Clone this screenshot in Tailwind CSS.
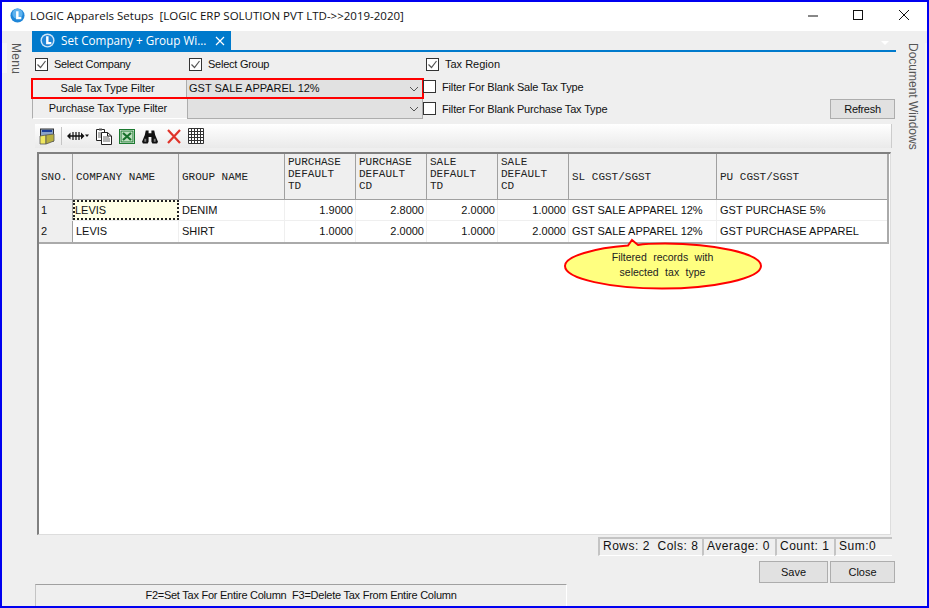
<!DOCTYPE html>
<html lang="en">
<head>
  <meta charset="UTF-8" />
  <title>LOGIC Apparels Setups</title>
  <script src="https://cdn.jsdelivr.net/npm/@tailwindcss/browser@4"></script>
</head>
<body class="bg-[#efefef]">
  <div class="relative w-[929px] h-[608px] overflow-hidden border-2 border-[#0000f0] bg-[#efefef] flex flex-col font-['Liberation_Sans',sans-serif] text-[11px] text-[#111]">

    <!-- title bar -->
    <div class="h-[29px] bg-white flex items-center shrink-0">
      <svg class="ml-[8px] mb-[2px] w-[15px] h-[15px]" viewBox="0 0 16 16"><circle cx="8" cy="8" r="7.5" fill="#1f86d8"/><circle cx="8" cy="6" r="5.500" fill="#5fb2ee"/><path d="M6.500 3.500h2.600v6.200h3v2.300H6.500z" fill="#fff"/></svg>
      <span class="ml-[5px] mb-[2px] font-['Open_Sans',sans-serif] text-[11.5px] whitespace-pre">LOGIC Apparels Setups  [LOGIC ERP SOLUTION PVT LTD-&gt;&gt;2019-2020]</span>
      <div class="ml-auto flex items-center">
        <svg class="w-[46px] h-[16px]" viewBox="0 0 46 16"><path d="M19 7h10" stroke="#111" stroke-width="1"/></svg>
        <svg class="w-[46px] h-[16px]" viewBox="0 0 46 16"><rect x="18.500" y="1.500" width="9" height="9" fill="none" stroke="#111"/></svg>
        <svg class="w-[46px] h-[16px]" viewBox="0 0 46 16"><path d="M18 1l10 10M28 1L18 11" stroke="#111" stroke-width="1"/></svg>
      </div>
    </div>

    <div class="flex flex-1 min-h-0">
      <!-- left dock strip -->
      <div class="w-[30px] shrink-0 pt-[12px] flex">
        <div class="w-[5px] h-[30px] bg-[#f5f5f5]"></div>
        <span class="h-[32px] [writing-mode:vertical-rl] text-[12px] text-[#555] tracking-[0.3px]">Menu</span>
      </div>

      <!-- centre -->
      <div class="w-[864px] shrink-0 flex flex-col relative">
        <!-- tab strip -->
        <div class="h-[21px] shrink-0 border-b-2 border-[#007acc] flex relative">
          <div class="w-[199px] h-[19px] bg-[#007acc] text-white flex items-center">
            <svg class="ml-[8px] w-[15px] h-[15px]" viewBox="0 0 16 16"><circle cx="8" cy="8" r="7.500" fill="#cfe6f8"/><circle cx="8" cy="8" r="6" fill="#1f86d8"/><path d="M6.500 3.500h2.600v6.200h3v2.300H6.500z" fill="#fff"/></svg>
            <span class="ml-[6px] font-['Open_Sans',sans-serif] text-[11.7px] whitespace-nowrap">Set Company + Group Wi...</span>
            <svg class="ml-auto mr-[6px] w-[10px] h-[10px]" viewBox="0 0 10 10"><path d="M1 1l8 8M9 1L1 9" stroke="#fff" stroke-width="1.200"/></svg>
          </div>
          <div class="absolute right-[7px] top-[10px] w-0 h-0 border-l-[4px] border-r-[4px] border-t-[4px] border-l-transparent border-r-transparent border-t-white"></div>
        </div>

        <!-- checkboxes row -->
        <div class="h-[23px] shrink-0 flex items-center mt-[1px]">
          <label class="ml-[3px] w-[154px] flex items-center">
            <svg class="w-[13px] h-[13px]" viewBox="0 0 13 13"><rect x=".5" y=".5" width="12" height="12" fill="#fff" stroke="#333"/><path d="M2.500 6.500l3 3 5-6.500" fill="none" stroke="#555" stroke-width="1.200"/></svg>
            <span class="ml-[6px] tracking-[-0.3px]">Select Company</span>
          </label>
          <label class="w-[237px] flex items-center">
            <svg class="w-[13px] h-[13px]" viewBox="0 0 13 13"><rect x=".5" y=".5" width="12" height="12" fill="#fff" stroke="#333"/><path d="M2.500 6.500l3 3 5-6.500" fill="none" stroke="#555" stroke-width="1.200"/></svg>
            <span class="ml-[6px] tracking-[-0.25px]">Select Group</span>
          </label>
          <label class="flex items-center">
            <svg class="w-[13px] h-[13px]" viewBox="0 0 13 13"><rect x=".5" y=".5" width="12" height="12" fill="#fff" stroke="#333"/><path d="M2.500 6.500l3 3 5-6.500" fill="none" stroke="#555" stroke-width="1.200"/></svg>
            <span class="ml-[6px]">Tax Region</span>
          </label>
        </div>

        <!-- filter rows -->
        <div class="h-[23px] shrink-0 flex">
          <div class="ml-[-1px] mt-[2px] w-[393px] h-[21px] border-2 border-[#f00] flex">
            <div class="w-[153px] flex items-center justify-center pr-[4px] tracking-[-0.1px]">Sale Tax Type Filter</div>
            <div class="flex-1 bg-[#e1e1e1] border-l border-[#adadad] flex items-center pl-[2px]">
              GST SALE APPAREL 12%
              <svg class="ml-auto mr-[3px] w-[10px] h-[6px]" viewBox="0 0 10 6"><path d="M1 1l4 4 4-4" fill="none" stroke="#555"/></svg>
            </div>
          </div>
          <svg class="ml-[-1px] mt-[4px] w-[13px] h-[13px]" viewBox="0 0 13 13"><rect x=".5" y=".5" width="12" height="12" fill="#fff" stroke="#333"/></svg>
          <span class="ml-[6px] mt-[1px] leading-[20px] tracking-[-0.16px]">Filter For Blank Sale Tax Type</span>
        </div>
        <div class="h-[20px] shrink-0 flex relative">
          <div class="w-[391px] h-[20px] flex">
            <div class="w-[155px] flex items-center justify-center pr-[4px] border-l border-b border-l-[#adadad] border-b-white tracking-[-0.1px]">Purchase Tax Type Filter</div>
            <div class="flex-1 bg-[#e1e1e1] border-l border-r border-b border-[#adadad] flex items-center">
              <svg class="ml-auto mr-[3px] w-[10px] h-[6px]" viewBox="0 0 10 6"><path d="M1 1l4 4 4-4" fill="none" stroke="#555"/></svg>
            </div>
          </div>
          <svg class="mt-[3px] w-[13px] h-[13px]" viewBox="0 0 13 13"><rect x=".5" y=".5" width="12" height="12" fill="#fff" stroke="#333"/></svg>
          <span class="ml-[6px] leading-[20px] tracking-[-0.16px]">Filter For Blank Purchase Tax Type</span>
          <button class="absolute left-[798px] top-0 w-[65px] h-[20px] bg-[#e1e1e1] border border-[#adadad] tracking-[-0.3px]">Refresh</button>
        </div>

        <!-- toolbar -->
        <div class="h-[24px] shrink-0 mt-[5px] ml-[3px] w-[857px] bg-gradient-to-b from-white to-[#eaeaea] border-r border-[#ccc] flex items-center">
          <svg class="ml-[4px] w-[16px] h-[17px]" viewBox="0 0 16 17"><rect x="1.500" y="1" width="13" height="12" fill="#8aa2c8" stroke="#333"/><rect x="3" y="2" width="10" height="2" fill="#1c3e9a"/><path d="M1 8l6-1v9H1z" fill="#f0e860" stroke="#555" stroke-width=".8"/><path d="M7 7l8-1v7l-8 3z" fill="#b8b040" stroke="#555" stroke-width=".8"/></svg>
          <div class="ml-[6px] w-px h-[18px] bg-[#c4c4c4]"></div>
          <svg class="ml-[5px] w-[22px] h-[10px]" viewBox="0 0 22 10"><path d="M3 5h12" stroke="#111" stroke-width="1.500"/><path d="M0 5l3.500-3.500v7zM17.500 5L14 1.500v7z" fill="#111"/><path d="M6 1v8M9 1v8M12 1v8" stroke="#111" stroke-width="1.200"/><path d="M18 3.500h4l-2 2.500z" fill="#111"/></svg>
          <svg class="ml-[7px] w-[16px] h-[17px]" viewBox="0 0 16 17"><path d="M.5 1.500h8v11h-8z" fill="#fff" stroke="#222"/><path d="M3 .5h3v2H3z" fill="#555"/><path d="M5.500 4.500h6l4 3.500v8.500h-10z" fill="#fff" stroke="#222"/><path d="M11.500 4.500V8h4" fill="none" stroke="#222"/><path d="M2 5h3M2 7h3M2 9h3M7 9h6M7 11h7M7 13h7" stroke="#444" stroke-width=".8"/></svg>
          <svg class="ml-[7px] w-[16px] h-[15px]" viewBox="0 0 16 15"><rect x=".5" y=".5" width="15" height="14" fill="#fff" stroke="#1c7a30"/><rect x="2" y="2" width="12" height="11" fill="#bfe0c0" stroke="#1c7a30"/><path d="M4 4l8 7M12 4l-8 7" stroke="#17702b" stroke-width="2.200"/></svg>
          <svg class="ml-[7px] w-[16px] h-[15px]" viewBox="0 0 17 15"><path d="M4 1h3v3h3V1h3l1 5 3 7-1 2H11l-1-2V8H7v5l-1 2H1l-1-2 3-7z" fill="#111"/><path d="M2.500 10h2v3h-2zM12.500 10h2v3h-2z" fill="#777"/></svg>
          <svg class="ml-[9px] w-[14px] h-[15px]" viewBox="0 0 14 15"><path d="M1 1l12 13M13 1L1 14" stroke="#e0342a" stroke-width="2.200"/></svg>
          <svg class="ml-[7px] w-[16px] h-[16px]" viewBox="0 0 16 16"><path d="M.5.5h15v15H.5zM.5 3.500h15M.5 6.500h15M.5 9.500h15M.5 12.500h15M3.500.5v15M6.500.5v15M9.500.5v15M12.500.5v15" fill="#fff" stroke="#333"/></svg>
        </div>

        <!-- grid -->
        <div class="h-[383px] shrink-0 mt-[4px] ml-[5px] w-[854px] bg-white border-l-2 border-t-2 border-[#808080] border-r border-r-[#ddd] border-b border-b-[#ddd]">
          <div class="w-[850px] border-r-2 border-b-2 border-[#aaaaaa]">
            <div class="grid grid-cols-[34px_106px_106px_71px_71px_71px_71px_148px_170px] h-[46px] bg-[#efefef] border-b border-[#a0a0a0] font-['Liberation_Mono',monospace] text-[11px] leading-[12px] text-[#222]">
              <div class="flex items-center pl-[2px] border-r border-[#a0a0a0]">SNO.</div>
              <div class="flex items-center pl-[3px] border-r border-[#a0a0a0]">COMPANY NAME</div>
              <div class="flex items-center pl-[3px] border-r border-[#a0a0a0]">GROUP NAME</div>
              <div class="flex items-center pl-[3px] pb-[6px] border-r border-[#a0a0a0]">PURCHASE<br />DEFAULT<br />TD</div>
              <div class="flex items-center pl-[3px] pb-[6px] border-r border-[#a0a0a0]">PURCHASE<br />DEFAULT<br />CD</div>
              <div class="flex items-center pl-[3px] pb-[6px] border-r border-[#a0a0a0]">SALE<br />DEFAULT<br />TD</div>
              <div class="flex items-center pl-[3px] pb-[6px] border-r border-[#a0a0a0]">SALE<br />DEFAULT<br />CD</div>
              <div class="flex items-center pl-[3px] border-r border-[#a0a0a0]">SL CGST/SGST</div>
              <div class="flex items-center pl-[3px]">PU CGST/SGST</div>
            </div>
            <div class="grid grid-cols-[34px_106px_106px_71px_71px_71px_71px_148px_170px] h-[21px] border-b border-[#efefef] leading-[20px]">
              <div class="bg-[#efefef] pl-[2px] border-r border-[#a0a0a0]">1</div>
              <div class="bg-[#ffffe6] border-2 border-dotted border-[#222] leading-[16px]">LEVIS</div>
              <div class="pl-[3px] border-r border-[#efefef]">DENIM</div>
              <div class="pr-[2px] text-right border-r border-[#efefef]">1.9000</div>
              <div class="pr-[2px] text-right border-r border-[#efefef]">2.8000</div>
              <div class="pr-[2px] text-right border-r border-[#efefef]">2.0000</div>
              <div class="pr-[2px] text-right border-r border-[#efefef]">1.0000</div>
              <div class="pl-[3px] border-r border-[#efefef]">GST SALE APPAREL 12%</div>
              <div class="pl-[3px]">GST PURCHASE 5%</div>
            </div>
            <div class="grid grid-cols-[34px_106px_106px_71px_71px_71px_71px_148px_170px] h-[21px] leading-[20px]">
              <div class="bg-[#efefef] pl-[2px] border-r border-[#a0a0a0]">2</div>
              <div class="pl-[3px] border-r border-[#efefef]">LEVIS</div>
              <div class="pl-[3px] border-r border-[#efefef]">SHIRT</div>
              <div class="pr-[2px] text-right border-r border-[#efefef]">1.0000</div>
              <div class="pr-[2px] text-right border-r border-[#efefef]">2.0000</div>
              <div class="pr-[2px] text-right border-r border-[#efefef]">1.0000</div>
              <div class="pr-[2px] text-right border-r border-[#efefef]">2.0000</div>
              <div class="pl-[3px] border-r border-[#efefef]">GST SALE APPAREL 12%</div>
              <div class="pl-[3px]">GST PURCHASE APPAREL</div>
            </div>
          </div>
        </div>

        <!-- status bar -->
        <div class="h-[19px] shrink-0 mt-[2px] flex justify-end pr-[4px] text-[12px] tracking-[0.5px]">
          <div class="w-[104px] pl-[3px] border-l-2 border-t-2 border-[#c4c4c4] border-b border-b-white leading-[15px] whitespace-pre">Rows: 2  Cols: 8</div>
          <div class="w-[73px] pl-[3px] border-l-2 border-t-2 border-[#c4c4c4] border-b border-b-white leading-[15px]">Average: 0</div>
          <div class="w-[59px] pl-[3px] border-l-2 border-t-2 border-[#c4c4c4] border-b border-b-white leading-[15px]">Count: 1</div>
          <div class="w-[58px] pl-[3px] border-l-2 border-t-2 border-[#c4c4c4] border-b border-b-white leading-[15px]">Sum:0</div>
        </div>

        <!-- buttons -->
        <div class="h-[22px] shrink-0 mt-[5px] flex justify-end gap-[2px] pr-[1px]">
          <button class="w-[69px] h-[22px] bg-[#e1e1e1] border border-[#adadad]">Save</button>
          <button class="w-[65px] h-[22px] bg-[#e1e1e1] border border-[#adadad]">Close</button>
        </div>

        <!-- hint panel -->
        <div class="ml-[3px] mt-[1px] w-[532px] flex-1 border-t border-l border-r border-t-[#a0a0a0] border-l-[#c4c4c4] border-r-white flex items-center justify-center tracking-[-0.25px]">
          F2=Set Tax For Entire Column&nbsp; F3=Delete Tax From Entire Column
        </div>

        <!-- callout over the grid -->
        <div class="absolute left-[530px] top-[207px] w-[202px] h-[54px]">
          <svg class="absolute inset-0" width="202" height="54" viewBox="0 0 202 54"><path d="M70 2l6 5c8-1.500 18-1.500 27-1.500 48 0 96 10 96 22.500s-48 22.500-99 22.500S3 41 3 28c0-10 30-18 63-20.500z" fill="#ffff80" stroke="#f00" stroke-width="2"/></svg>
          <div class="absolute inset-x-0 top-[12px] pr-[1px] text-center text-[10.5px] leading-[15px] text-[#222] [word-spacing:3.500px]">Filtered records with<br />selected tax type</div>
        </div>
      </div>

      <!-- right dock strip -->
      <div class="flex-1 pt-[12px] flex pl-[8px]">
        <span class="h-[108px] [writing-mode:vertical-rl] text-[12px] text-[#555]">Document Windows</span>
        <div class="ml-[3px] w-[5px] flex-1 bg-[#f5f5f5]"></div>
      </div>
    </div>
  </div>
</body>
</html>
